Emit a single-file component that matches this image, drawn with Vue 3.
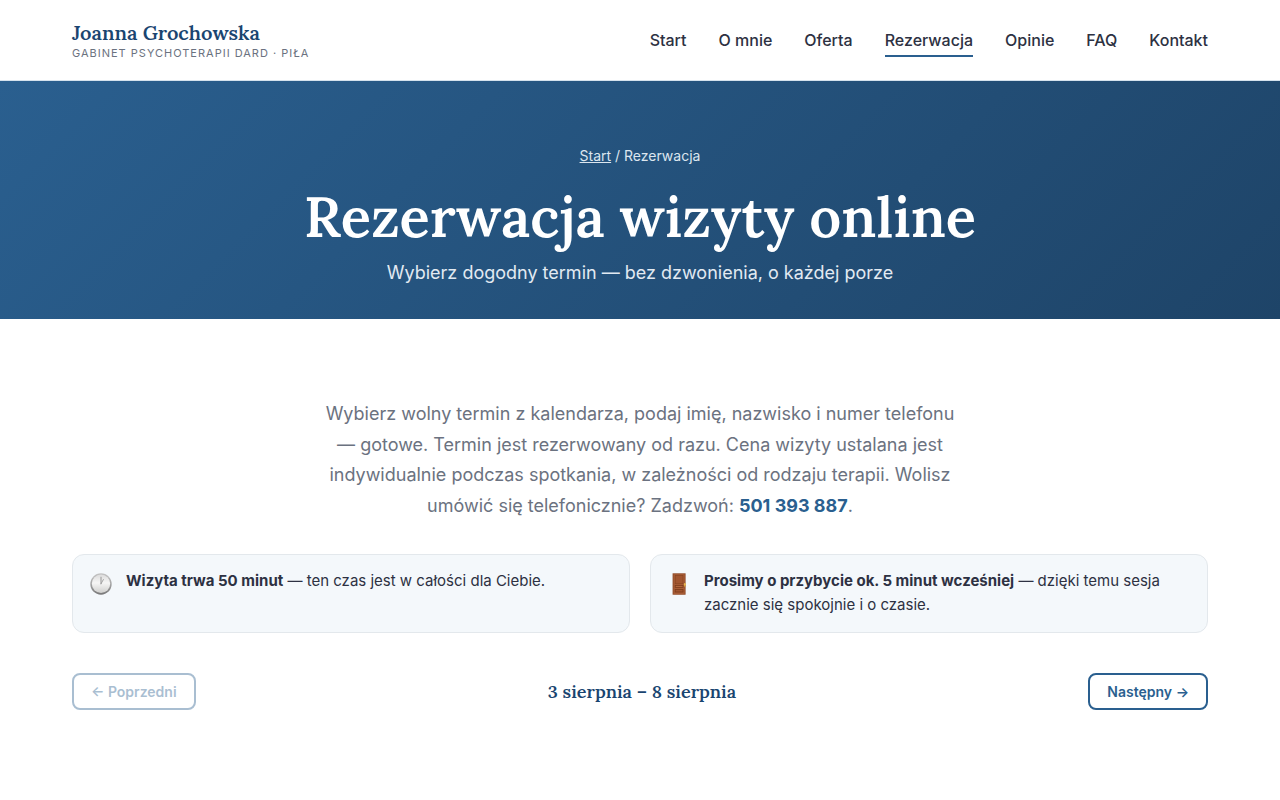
<script setup>
const links = [
  { label: 'Start', href: '#start' },
  { label: 'O mnie', href: '#o-mnie' },
  { label: 'Oferta', href: '#oferta' },
  { label: 'Rezerwacja', href: '#rezerwacja', active: true },
  { label: 'Opinie', href: '#opinie' },
  { label: 'FAQ', href: '#faq' },
  { label: 'Kontakt', href: '#kontakt' },
]
</script>

<template>
  <div class="page">
    <header class="site-header">
      <div class="container bar">
        <a class="brand" href="#start">
          <span class="brand-name">Joanna Grochowska</span>
          <span class="brand-sub">Gabinet Psychoterapii DARD · Piła</span>
        </a>
        <nav class="nav">
          <a
            v-for="link in links"
            :key="link.label"
            :href="link.href"
            :class="{ active: link.active }"
            :aria-current="link.active ? 'page' : undefined"
          >{{ link.label }}</a>
        </nav>
      </div>
    </header>

    <section class="hero">
      <p class="crumbs"><a href="#start">Start</a> / Rezerwacja</p>
      <h1>Rezerwacja wizyty online</h1>
      <p class="lead">Wybierz dogodny termin — bez dzwonienia, o każdej porze</p>
    </section>

    <main class="container content">
      <p class="intro">
        Wybierz wolny termin z kalendarza, podaj imię, nazwisko i numer telefonu — gotowe.
        Termin jest rezerwowany od razu. Cena wizyty ustalana jest indywidualnie podczas
        spotkania, w zależności od rodzaju terapii. Wolisz umówić się telefonicznie?
        Zadzwoń: <a href="tel:+48501393887">501 393 887</a>.
      </p>

      <div class="notes">
        <div class="note">
          <svg class="icon" viewBox="0 0 22 22" aria-hidden="true">
            <defs>
              <linearGradient id="rim" x1="0" y1="0" x2="0" y2="1">
                <stop offset="0" stop-color="#c4c4c4" />
                <stop offset="0.5" stop-color="#a6a6a6" />
                <stop offset="1" stop-color="#777" />
              </linearGradient>
              <linearGradient id="face" x1="0" y1="0" x2="0" y2="1">
                <stop offset="0" stop-color="#dcdcdc" />
                <stop offset="0.45" stop-color="#f6f6f5" />
                <stop offset="1" stop-color="#cfcfcd" />
              </linearGradient>
            </defs>
            <circle cx="11" cy="11" r="10.7" fill="url(#rim)" />
            <circle cx="11" cy="10.8" r="9.2" fill="url(#face)" />
            <path d="M11 10.8V4.2" stroke="#8a8a8a" stroke-width="0.9" stroke-linecap="round" />
            <path d="M11 10.8l2.4-4.3" stroke="#9c9c9c" stroke-width="0.9" stroke-linecap="round" />
          </svg>
          <p><strong>Wizyta trwa 50 minut</strong> — ten czas jest w całości dla Ciebie.</p>
        </div>
        <div class="note">
          <svg class="icon" viewBox="0 0 22 22" aria-hidden="true">
            <rect x="4.6" y="0.3" width="13" height="21.4" fill="#8f4a27" />
            <rect x="5.5" y="1.2" width="11.2" height="20" fill="#a85d36" />
            <rect x="7.2" y="2.5" width="7.8" height="8.3" fill="#a1552f" stroke="#83421f" stroke-width="0.6" />
            <rect x="7.2" y="12.4" width="7.8" height="2" fill="#b0653b" stroke="#7c3b1b" stroke-width="0.8" />
            <rect x="7.2" y="16.4" width="7.8" height="2.6" fill="#a1552f" stroke="#7c3b1b" stroke-width="0.8" />
            <rect x="16" y="10.2" width="1.6" height="3.4" fill="#d19a3e" />
            <circle cx="16.9" cy="11.3" r="1.1" fill="#e5b653" />
          </svg>
          <p>
            <strong>Prosimy o przybycie ok. 5 minut wcześniej</strong> — dzięki temu sesja
            zacznie się spokojnie i o czasie.
          </p>
        </div>
      </div>

      <div class="week">
        <button type="button" disabled>← Poprzedni</button>
        <h2>3 sierpnia – 8 sierpnia</h2>
        <button type="button">Następny →</button>
      </div>
    </main>
  </div>
</template>

<style>
body {
  margin: 0;
  background: #fff;
}
</style>

<style scoped>
.page {
  font-family: Inter, "Liberation Sans", sans-serif;
  font-size: 16px;
  color: #2d3142;
}
p,
h1,
h2 {
  margin: 0;
}
.container {
  box-sizing: border-box;
  max-width: 1184px;
  margin: 0 auto;
  padding: 0 24px;
}
.site-header {
  border-bottom: 1px solid #d5e2ed;
}
.bar {
  display: flex;
  align-items: center;
  justify-content: space-between;
  min-height: 80px;
}
.brand {
  display: flex;
  flex-direction: column;
  text-decoration: none;
}
.brand-name {
  font-family: Lora, "Liberation Serif", serif;
  font-size: 20px;
  line-height: 26px;
  font-weight: 600;
  color: #1a4570;
}
.brand-sub {
  font-size: 11px;
  line-height: 14px;
  letter-spacing: 1px;
  text-transform: uppercase;
  color: #6b7280;
}
.nav {
  display: flex;
  gap: 32px;
}
.nav a {
  padding: 5px 0 3px;
  border-bottom: 2px solid transparent;
  font-weight: 500;
  line-height: 24px;
  color: #2d3142;
  text-decoration: none;
}
.nav a.active {
  border-bottom-color: #2a5f8f;
}
.hero {
  padding: 63px 24px 31px;
  background: linear-gradient(135deg, #2a5f8f 0%, #1e4468 100%);
  text-align: center;
  color: #fff;
}
.crumbs {
  margin-bottom: 16px;
  font-size: 14px;
  line-height: 24px;
  color: #dce6ef;
}
.crumbs a {
  color: inherit;
}
h1 {
  font-family: Lora, "Liberation Serif", serif;
  font-size: 56px;
  line-height: 66px;
  font-weight: 600;
}
.lead {
  margin-top: 8px;
  font-size: 18px;
  line-height: 30px;
  color: #e2eaf2;
}
.content {
  padding-top: 80px;
  padding-bottom: 80px;
}
.intro {
  max-width: 640px;
  margin: 0 auto 33px;
  font-size: 18px;
  line-height: 1.7;
  text-align: center;
  color: #6b7280;
}
.intro a {
  font-weight: 700;
  color: #2a5f8f;
  text-decoration: none;
}
.notes {
  display: grid;
  grid-template-columns: 1fr 1fr;
  gap: 20px;
  margin-bottom: 40px;
}
.note {
  display: flex;
  align-items: flex-start;
  gap: 14px;
  padding: 14px 17px 15px;
  border: 1px solid #e3e8ec;
  border-radius: 12px;
  background: #f4f8fb;
  font-size: 15px;
  line-height: 24px;
}
.icon {
  flex: none;
  width: 22px;
  height: 22px;
  margin-top: 4px;
}
.week {
  display: flex;
  align-items: center;
  justify-content: space-between;
}
.week h2 {
  font-family: Lora, "Liberation Serif", serif;
  font-size: 18px;
  line-height: 32px;
  font-weight: 600;
  color: #1a4570;
}
.week button {
  padding: 8px 17px;
  border: 2px solid #2a5f8f;
  border-radius: 8px;
  background: #fff;
  font-family: inherit;
  font-size: 14px;
  line-height: 17px;
  font-weight: 600;
  color: #2a5f8f;
}
.week button:disabled {
  opacity: 0.4;
}
</style>
